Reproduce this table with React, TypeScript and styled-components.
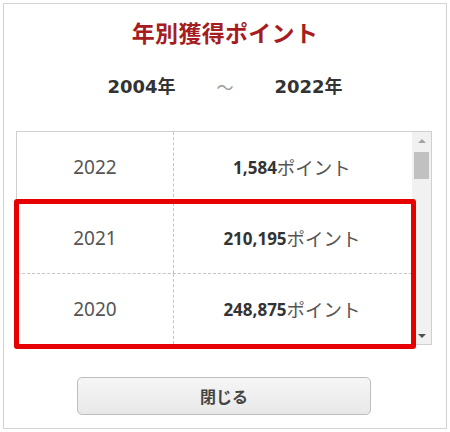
import React from "react";
import styled, { createGlobalStyle } from "styled-components";

const Global = createGlobalStyle`
  html, body { margin: 0; padding: 0; background: #fff; }
  body { font-family: "Noto Sans", "Noto Sans CJK JP", sans-serif; }
`;

const CJK = `"Noto Sans CJK JP", sans-serif`;

const Card = styled.div`
  box-sizing: border-box;
  margin: 3px;
  width: 444px;
  height: 426px;
  border: 1px solid #d2d2d2;
  background: #fff;
  display: flex;
  flex-direction: column;
  align-items: center;
  padding-top: 13px;
`;

const Title = styled.h1`
  margin: 0;
  height: 30px;
  line-height: 30px;
  font-family: ${CJK};
  font-size: 23px;
  font-weight: 700;
  color: #a51d1f;
  letter-spacing: 0.3px;
`;

const Range = styled.div`
  margin-top: 27px;
  height: 26px;
  display: flex;
  align-items: center;
  gap: 41px;
`;

const RangeYear = styled.span`
  font-family: "DejaVu Sans", "Noto Sans CJK JP", sans-serif;
  font-weight: 700;
  font-size: 18px;
  color: #333;
  line-height: 26px;
`;

const Tilde = styled.span`
  font-family: ${CJK};
  font-size: 17px;
  color: #9a9a9a;
  line-height: 26px;
`;

const TableWrap = styled.div`
  position: relative;
  margin-top: 31px;
  align-self: flex-start;
  margin-left: 12px;
`;

const Table = styled.div`
  box-sizing: border-box;
  width: 416px;
  height: 214px;
  border: 1px solid #cfcfcf;
  display: flex;
`;

const Rows = styled.div`
  flex: 1;
  overflow: hidden;
  display: flex;
  flex-direction: column;
`;

const Row = styled.div<{ $last?: boolean }>`
  flex: none;
  height: 70px;
  display: grid;
  grid-template-columns: 157px 1fr;
  border-bottom: ${(p) => (p.$last ? "none" : "1px dashed #c4c4c4")};
`;

const YearCell = styled.div`
  display: flex;
  align-items: center;
  justify-content: center;
  border-right: 1px dashed #c4c4c4;
  font-family: "Noto Sans", sans-serif;
  font-size: 19px;
  color: #555;
`;

const PointCell = styled.div`
  display: flex;
  align-items: center;
  justify-content: center;
  padding-right: 2px;
`;

const Num = styled.span`
  font-family: "Noto Sans", sans-serif;
  font-weight: 700;
  font-size: 17px;
  color: #333;
`;

const Unit = styled.span`
  font-family: ${CJK};
  font-size: 18.5px;
  color: #555;
`;

const ScrollBar = styled.div`
  width: 19px;
  flex: none;
  background: #f1f1f1;
  display: flex;
  flex-direction: column;
  align-items: center;
`;

const ArrowBtn = styled.div`
  height: 17px;
  width: 100%;
  display: flex;
  align-items: center;
  justify-content: center;
`;

const Triangle = styled.div<{ $down?: boolean; $color: string }>`
  width: 0;
  height: 0;
  border-left: 4px solid transparent;
  border-right: 4px solid transparent;
  ${(p) =>
    p.$down
      ? `border-top: 4px solid ${p.$color};`
      : `border-bottom: 4px solid ${p.$color};`}
`;

const Track = styled.div`
  flex: 1;
  width: 100%;
  display: flex;
  justify-content: center;
`;

const Thumb = styled.div`
  margin-top: 3px;
  width: 15px;
  height: 27px;
  background: #c1c1c1;
`;

const Highlight = styled.div`
  position: absolute;
  left: -2px;
  top: 68px;
  width: 402px;
  height: 150px;
  box-sizing: border-box;
  border: 5px solid #e60000;
  border-radius: 3px;
  pointer-events: none;
`;

const CloseButton = styled.button`
  margin-top: 32px;
  margin-left: -2px;
  box-sizing: border-box;
  width: 294px;
  height: 38px;
  border: 1px solid #bdbdbd;
  border-radius: 5px;
  background: linear-gradient(#f6f6f6, #e8e8e8);
  font-family: ${CJK};
  font-size: 16px;
  font-weight: 700;
  color: #444;
  padding: 0;
`;

const data = [
  { year: "2022", points: "1,584" },
  { year: "2021", points: "210,195" },
  { year: "2020", points: "248,875" },
];

export default function App() {
  return (
    <>
      <Global />
      <Card>
        <Title>年別獲得ポイント</Title>
        <Range>
          <RangeYear>2004年</RangeYear>
          <Tilde>～</Tilde>
          <RangeYear>2022年</RangeYear>
        </Range>
        <TableWrap>
          <Table>
            <Rows>
              {data.map((d, i) => (
                <Row key={d.year} $last={i === data.length - 1}>
                  <YearCell>{d.year}</YearCell>
                  <PointCell>
                    <Num>{d.points}</Num>
                    <Unit>ポイント</Unit>
                  </PointCell>
                </Row>
              ))}
            </Rows>
            <ScrollBar>
              <ArrowBtn>
                <Triangle $color="#a3a3a3" />
              </ArrowBtn>
              <Track>
                <Thumb />
              </Track>
              <ArrowBtn>
                <Triangle $down $color="#505050" />
              </ArrowBtn>
            </ScrollBar>
          </Table>
          <Highlight />
        </TableWrap>
        <CloseButton>閉じる</CloseButton>
      </Card>
    </>
  );
}
